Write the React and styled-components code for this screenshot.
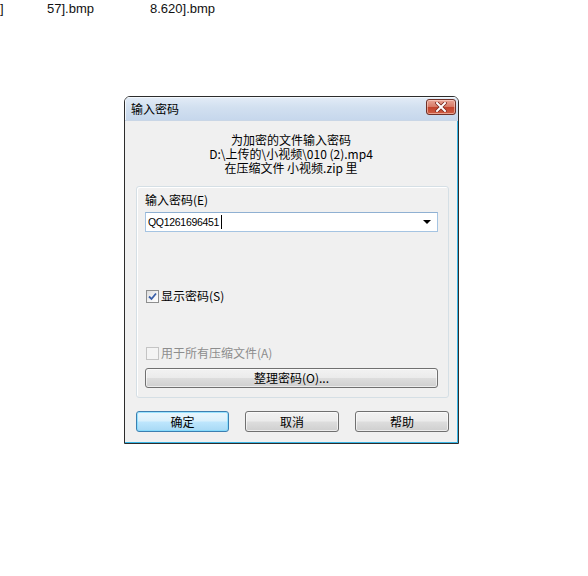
import React from "react";
import styled, { createGlobalStyle } from "styled-components";

const GlobalStyle = createGlobalStyle`
  html, body {
    margin: 0;
    padding: 0;
    background: #ffffff;
  }
  body {
    font-family: "Noto Sans CJK SC", "Liberation Sans", sans-serif;
  }
`;

const Desktop = styled.div`
  position: relative;
  width: 588px;
  height: 576px;
  background: #ffffff;
  overflow: hidden;
`;

const FileRow = styled.div`
  display: grid;
  grid-template-columns: 47px 103px auto;
  height: 18px;
  align-items: center;
  font-family: "Liberation Sans", "Noto Sans CJK SC", sans-serif;
  font-size: 13px;
  color: #111;
`;

const FileName = styled.span`
  white-space: nowrap;
  line-height: 18px;
`;

// the dialog floats over the desktop like any other window
const Dialog = styled.div`
  position: absolute;
  left: 124px;
  top: 96px;
  width: 335px;
  height: 348px;
  box-sizing: border-box;
  border: 1px solid #2c2c2c;
  border-radius: 6px 6px 0 0;
  background: #f0f0f0;
  display: flex;
  flex-direction: column;
  overflow: hidden;
  font-size: 12px;
  color: #000;
`;

const TitleBar = styled.div`
  height: 23px;
  flex: none;
  display: flex;
  align-items: center;
  justify-content: space-between;
  padding: 0 2px 0 6px;
  background: linear-gradient(#e3ecf7, #d2e0f0 45%, #c6d7ec);
  border-bottom: 1px solid #c9d6e6;
  box-shadow: inset 1px 1px 0 #f4f8fc;
`;

const TitleText = styled.span`
  font-size: 12px;
  line-height: 14px;
  color: #000;
`;

const CloseButton = styled.div`
  width: 30px;
  height: 16px;
  box-sizing: border-box;
  border: 1px solid #6f3128;
  border-radius: 3px;
  background: linear-gradient(#e9a697, #d77a66 48%, #c2432c 52%, #cf5e45);
  box-shadow: inset 0 0 0 1px rgba(255, 220, 210, 0.55);
  display: flex;
  align-items: center;
  justify-content: center;
  margin-top: -3px;
`;

const Client = styled.div`
  flex: 1;
  display: flex;
  flex-direction: column;
  padding: 12px 8px 0 11px;
  border-right: 1px solid #3ab6e6;
  border-bottom: 1px solid #3ab6e6;
`;

const Header = styled.div`
  margin-left: -11px;
  margin-right: -8px;
  text-align: center;
  line-height: 14px;
  font-size: 12px;
  white-space: pre;
`;

const GroupBox = styled.div`
  margin-top: 11px;
  height: 212px;
  box-sizing: border-box;
  border: 1px solid #d5dfe5;
  border-radius: 3px;
  box-shadow: inset 1px 1px 0 #ffffff;
  padding: 6px 10px 0 8px;
  display: flex;
  flex-direction: column;
`;

const Label = styled.div`
  line-height: 14px;
  font-size: 12px;
`;

const Combo = styled.div`
  margin-top: 5px;
  height: 20px;
  box-sizing: border-box;
  border: 1px solid #a5c4e2;
  border-top-color: #8fb0d2;
  background: #ffffff;
  display: flex;
  align-items: center;
  padding: 0 4px 0 2px;
`;

const ComboText = styled.span`
  font-family: "Liberation Sans", sans-serif;
  font-size: 10.5px;
  letter-spacing: -0.3px;
  line-height: 14px;
`;

const Caret = styled.span`
  display: inline-block;
  width: 1px;
  height: 14px;
  background: #000;
  margin-left: 2px;
`;

const ComboArrow = styled.div`
  margin-left: auto;
  width: 0;
  height: 0;
  border-left: 4px solid transparent;
  border-right: 4px solid transparent;
  border-top: 4px solid #000;
  margin-right: 2px;
`;

const CheckRow = styled.label`
  display: flex;
  align-items: center;
  gap: 2px;
  margin-top: ${(p) => p.$gap}px;
  line-height: 14px;
  color: ${(p) => (p.$disabled ? "#8d8d8d" : "#000")};
`;

const Box = styled.span`
  width: 13px;
  height: 13px;
  box-sizing: border-box;
  margin-left: 1px;
  border: 1px solid ${(p) => (p.$disabled ? "#c4c4c4" : "#8e8f8f")};
  background: ${(p) =>
    p.$disabled
      ? "#f4f4f4"
      : "linear-gradient(135deg, #dcdcdc, #f6f6f6 60%, #ffffff)"};
  display: flex;
  align-items: center;
  justify-content: center;
`;

const Button = styled.div`
  height: ${(p) => p.$h || 20}px;
  width: ${(p) => (p.$w ? `${p.$w}px` : "auto")};
  box-sizing: border-box;
  border: 1px solid ${(p) => (p.$primary ? "#3c7fb1" : "#707070")};
  border-radius: 3px;
  background: ${(p) =>
    p.$primary
      ? "linear-gradient(#eaf6fd, #d9f0fc 48%, #bee6fd 52%, #a7d9f5)"
      : "linear-gradient(#f2f2f2, #ebebeb 48%, #dddddd 52%, #cfcfcf)"};
  box-shadow: inset 0 0 0 1px
    ${(p) => (p.$primary ? "rgba(120, 220, 255, 0.7)" : "rgba(255,255,255,0.6)")};
  display: flex;
  align-items: center;
  justify-content: center;
  font-size: 12px;
  line-height: 14px;
`;

const WideButton = styled(Button)`
  margin-top: 8px;
`;

const ButtonRow = styled.div`
  margin-top: 13px;
  display: flex;
  justify-content: space-between;
`;

function CloseGlyph() {
  return (
    <svg width="12" height="10" viewBox="0 0 12 10">
      <path
        d="M2 1 L10 9 M10 1 L2 9"
        stroke="#7a2a20"
        strokeWidth="3.6"
        strokeLinecap="square"
      />
      <path
        d="M2 1 L10 9 M10 1 L2 9"
        stroke="#ffffff"
        strokeWidth="2"
        strokeLinecap="square"
      />
    </svg>
  );
}

function CheckGlyph() {
  return (
    <svg width="9" height="9" viewBox="0 0 9 9">
      <path
        d="M1 4.5 L3.5 7 L8 1.5"
        fill="none"
        stroke="#3a5fa8"
        strokeWidth="1.8"
      />
    </svg>
  );
}

export default function App() {
  return (
    <>
      <GlobalStyle />
      <Desktop>
        <FileRow>
          <FileName>]</FileName>
          <FileName>57].bmp</FileName>
          <FileName>8.620].bmp</FileName>
        </FileRow>

        <Dialog>
          <TitleBar>
            <TitleText>输入密码</TitleText>
            <CloseButton>
              <CloseGlyph />
            </CloseButton>
          </TitleBar>
          <Client>
            <Header>
              {"为加密的文件输入密码\nD:\\上传的\\小视频\\010 (2).mp4\n在压缩文件 小视频.zip 里"}
            </Header>
            <GroupBox>
              <Label>输入密码(E)</Label>
              <Combo>
                <ComboText>QQ1261696451</ComboText>
                <Caret />
                <ComboArrow />
              </Combo>
              <CheckRow $gap={57}>
                <Box>
                  <CheckGlyph />
                </Box>
                显示密码(S)
              </CheckRow>
              <CheckRow $gap={43} $disabled>
                <Box $disabled />
                用于所有压缩文件(A)
              </CheckRow>
              <WideButton>整理密码(O)...</WideButton>
            </GroupBox>
            <ButtonRow>
              <Button $primary $w={93} $h={21}>
                确定
              </Button>
              <Button $w={94} $h={21}>
                取消
              </Button>
              <Button $w={94} $h={21}>
                帮助
              </Button>
            </ButtonRow>
          </Client>
        </Dialog>
      </Desktop>
    </>
  );
}
